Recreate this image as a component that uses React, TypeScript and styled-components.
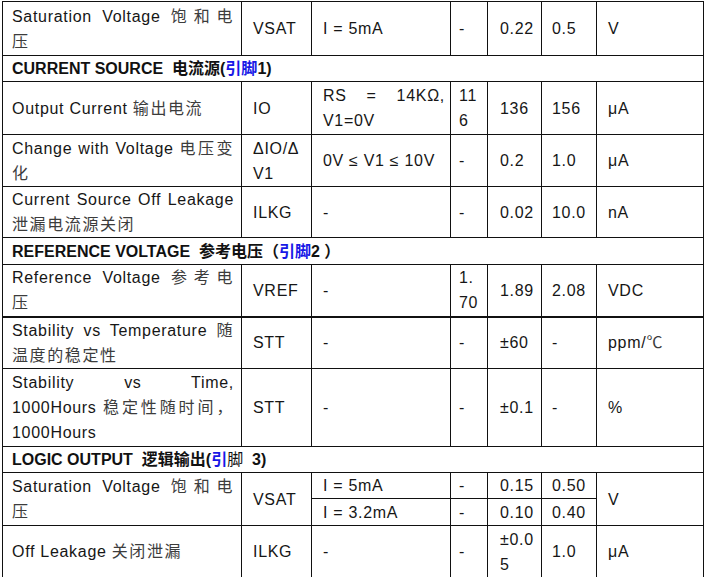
import React from "react";
import styled, { createGlobalStyle } from "styled-components";

const GlobalStyle = createGlobalStyle`
  html, body { margin: 0; padding: 0; background: #fff; }
  body { font-family: "Liberation Sans", Arial, "Noto Sans CJK SC", sans-serif; }
`;

const Sheet = styled.table`
  border-collapse: collapse;
  table-layout: fixed;
  width: 702px;
  margin: 1px 0 0 2px;
  font-size: 16px;
  line-height: 25px;
  letter-spacing: 0.7px;
  color: #161616;
`;

const Row = styled.tr<{ $h: number }>`
  height: ${p => p.$h}px;
`;

const Cell = styled.td<{ $pl?: number; $pr?: number; $thick?: boolean }>`
  border: 1px solid #111;
  ${p => p.$thick && "border-bottom: 2px solid #111;"}
  padding: 0 ${p => p.$pr ?? 4}px 0 ${p => p.$pl ?? 11}px;
  vertical-align: middle;
  white-space: nowrap;
  overflow: hidden;
`;

const Param = styled(Cell)`
  white-space: normal;
`;

const Head = styled.td`
  border: 1px solid #111;
  padding: 0 0 0 9px;
  font-weight: 700;
  letter-spacing: 0;
  white-space: nowrap;
  color: #111;
`;

const JLine = styled.span`
  display: block;
  text-align: justify;
  text-align-last: justify;
`;

const Zh = styled.span`
  color: #3c3c3c;
  letter-spacing: 1.6px;
  line-height: 1;
`;

const ZhBold = styled.span`
  line-height: 1;
`;

const Blue = styled.span`
  color: #1818e6;
  line-height: 1;
`;

const Plain = styled.span`
  font-weight: 400;
  line-height: 1;
`;

const cols = [239, 70, 139, 37, 54, 55, 107];

type Vals = React.ReactNode[];

function Values({ v, thick }: { v: Vals; thick?: boolean }) {
  return (
    <>
      <Cell $pl={11} $thick={thick}>{v[0]}</Cell>
      <Cell $pl={11} $pr={5} $thick={thick}>{v[1]}</Cell>
      <Cell $pl={8} $pr={2} $thick={thick}>{v[2]}</Cell>
      <Cell $pl={12} $pr={2} $thick={thick}>{v[3]}</Cell>
      <Cell $pl={10} $pr={2} $thick={thick}>{v[4]}</Cell>
      <Cell $pl={11} $thick={thick}>{v[5]}</Cell>
    </>
  );
}

export default function App() {
  return (
    <>
      <GlobalStyle />
      <Sheet>
        <colgroup>
          {cols.map((w, i) => (
            <col key={i} style={{ width: w }} />
          ))}
        </colgroup>
        <tbody>
          <Row $h={54}>
            <Param $pl={9} $pr={7}>
              <JLine>Saturation Voltage <Zh>饱和电</Zh></JLine>
              <Zh>压</Zh>
            </Param>
            <Values v={["VSAT", "I = 5mA", "-", "0.22", "0.5", "V"]} />
          </Row>
          <Row $h={25}>
            <Head colSpan={7}>
              CURRENT SOURCE&nbsp; <ZhBold>电流源</ZhBold>(<Blue>引脚</Blue>1)
            </Head>
          </Row>
          <Row $h={53}>
            <Param $pl={9} $pr={7}>
              Output Current <Zh>输出电流</Zh>
            </Param>
            <Values
              v={[
                "IO",
                <>
                  <JLine>RS = 14KΩ,</JLine>V1=0V
                </>,
                <>
                  11
                  <br />6
                </>,
                "136",
                "156",
                "μA",
              ]}
            />
          </Row>
          <Row $h={52}>
            <Param $pl={9} $pr={7}>
              <JLine>Change with Voltage <Zh>电压变</Zh></JLine>
              <Zh>化</Zh>
            </Param>
            <Values
              v={[
                <>
                  ΔIO/Δ
                  <br />
                  V1
                </>,
                "0V ≤ V1 ≤ 10V",
                "-",
                "0.2",
                "1.0",
                "μA",
              ]}
            />
          </Row>
          <Row $h={51}>
            <Param $pl={9} $pr={7}>
              <JLine>Current Source Off Leakage</JLine>
              <Zh>泄漏电流源关闭</Zh>
            </Param>
            <Values v={["ILKG", "-", "-", "0.02", "10.0", "nA"]} />
          </Row>
          <Row $h={27}>
            <Head colSpan={7}>
              REFERENCE VOLTAGE&nbsp; <ZhBold>参考电压（</ZhBold>
              <Blue>引脚</Blue>2 <ZhBold>）</ZhBold>
            </Head>
          </Row>
          <Row $h={52}>
            <Param $pl={9} $pr={7} $thick>
              <JLine>Reference Voltage <Zh>参考电</Zh></JLine>
              <Zh>压</Zh>
            </Param>
            <Values
              thick
              v={[
                "VREF",
                "-",
                <>
                  1.
                  <br />
                  70
                </>,
                "1.89",
                "2.08",
                "VDC",
              ]}
            />
          </Row>
          <Row $h={52}>
            <Param $pl={9} $pr={7}>
              <JLine>Stability vs Temperature <Zh>随</Zh></JLine>
              <Zh>温度的稳定性</Zh>
            </Param>
            <Values
              v={[
                "STT",
                "-",
                "-",
                "±60",
                "-",
                <>
                  ppm/<Zh>℃</Zh>
                </>,
              ]}
            />
          </Row>
          <Row $h={78}>
            <Param $pl={9} $pr={7}>
              <JLine>Stability vs Time,</JLine>
              <JLine>1000Hours <Zh>稳定性随时间，</Zh></JLine>
              1000Hours
            </Param>
            <Values v={["STT", "-", "-", "±0.1", "-", "%"]} />
          </Row>
          <Row $h={26}>
            <Head colSpan={7}>
              LOGIC OUTPUT&nbsp; <ZhBold>逻辑输出</ZhBold>(<Blue>引</Blue>
              <Plain>脚</Plain>&nbsp; 3)
            </Head>
          </Row>
          <Row $h={26}>
            <Param $pl={9} $pr={7} rowSpan={2}>
              <JLine>Saturation Voltage <Zh>饱和电</Zh></JLine>
              <Zh>压</Zh>
            </Param>
            <Cell $pl={11} rowSpan={2}>VSAT</Cell>
            <Cell $pl={11} $pr={5}>I = 5mA</Cell>
            <Cell $pl={8} $pr={2}>-</Cell>
            <Cell $pl={12} $pr={2}>0.15</Cell>
            <Cell $pl={10} $pr={2}>0.50</Cell>
            <Cell $pl={11} rowSpan={2}>V</Cell>
          </Row>
          <Row $h={27}>
            <Cell $pl={11} $pr={5}>I = 3.2mA</Cell>
            <Cell $pl={8} $pr={2}>-</Cell>
            <Cell $pl={12} $pr={2}>0.10</Cell>
            <Cell $pl={10} $pr={2}>0.40</Cell>
          </Row>
          <Row $h={52}>
            <Param $pl={9} $pr={7}>
              Off Leakage <Zh>关闭泄漏</Zh>
            </Param>
            <Values
              v={[
                "ILKG",
                "-",
                "-",
                <>
                  ±0.0
                  <br />5
                </>,
                "1.0",
                "μA",
              ]}
            />
          </Row>
        </tbody>
      </Sheet>
    </>
  );
}
